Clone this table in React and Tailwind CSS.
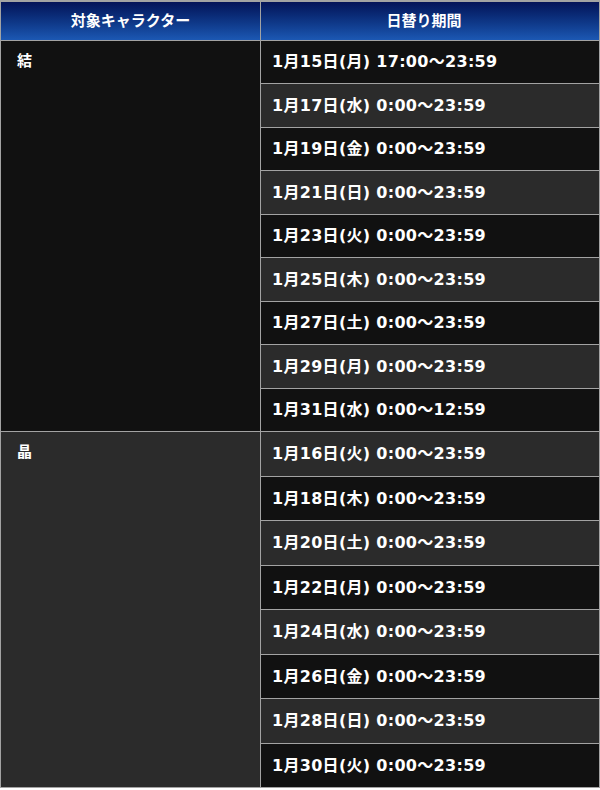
import React from "react";

const groups = [
  {
    name: "結",
    bg: "bg-[#111111]",
    rows: [
      "1月15日(月) 17:00〜23:59",
      "1月17日(水) 0:00〜23:59",
      "1月19日(金) 0:00〜23:59",
      "1月21日(日) 0:00〜23:59",
      "1月23日(火) 0:00〜23:59",
      "1月25日(木) 0:00〜23:59",
      "1月27日(土) 0:00〜23:59",
      "1月29日(月) 0:00〜23:59",
      "1月31日(水) 0:00〜12:59",
    ],
  },
  {
    name: "晶",
    bg: "bg-[#2b2b2b]",
    rows: [
      "1月16日(火) 0:00〜23:59",
      "1月18日(木) 0:00〜23:59",
      "1月20日(土) 0:00〜23:59",
      "1月22日(月) 0:00〜23:59",
      "1月24日(水) 0:00〜23:59",
      "1月26日(金) 0:00〜23:59",
      "1月28日(日) 0:00〜23:59",
      "1月30日(火) 0:00〜23:59",
    ],
  },
];

export default function App() {
  let n = 0;
  return (
    <div className="w-[600px] bg-white font-['DejaVu_Sans','Noto_Sans_CJK_JP',sans-serif] font-bold text-white">
      <div className="border-x border-t-2 border-[#a3a3a3]">
        {/* ヘッダー */}
        <div className="grid grid-cols-[260px_1fr] h-[39px] border-b border-[#a3a3a3] bg-linear-to-b from-[#051358] to-[#1c58b3] text-[15px]">
          <div className="flex items-center justify-center border-r border-[#a3a3a3]">対象キャラクター</div>
          <div className="flex items-center justify-center pr-3">日替り期間</div>
        </div>

        {groups.map((g, gi) => (
          <div key={g.name} className="grid grid-cols-[260px_1fr]">
            <div className={`${g.bg} border-r border-b border-[#a3a3a3] pl-4 pt-[10px] text-[15px] leading-[20px]`}>
              {g.name}
            </div>
            <div>
              {g.rows.map((r, i) => {
                const dark = n++ % 2 === 0;
                const h =
                  gi === 0
                    ? i % 2 === 0 ? "h-[43px]" : "h-[44px]"
                    : i % 2 === 0 ? "h-[45px]" : "h-[44px]";
                return (
                  <div
                    key={r}
                    className={`${h} ${dark ? "bg-[#111111]" : "bg-[#2b2b2b]"} flex items-center border-b border-[#a3a3a3] pl-[11px] text-[16px] tracking-[0.3px]`}
                  >
                    {r}
                  </div>
                );
              })}
            </div>
          </div>
        ))}
      </div>
    </div>
  );
}
